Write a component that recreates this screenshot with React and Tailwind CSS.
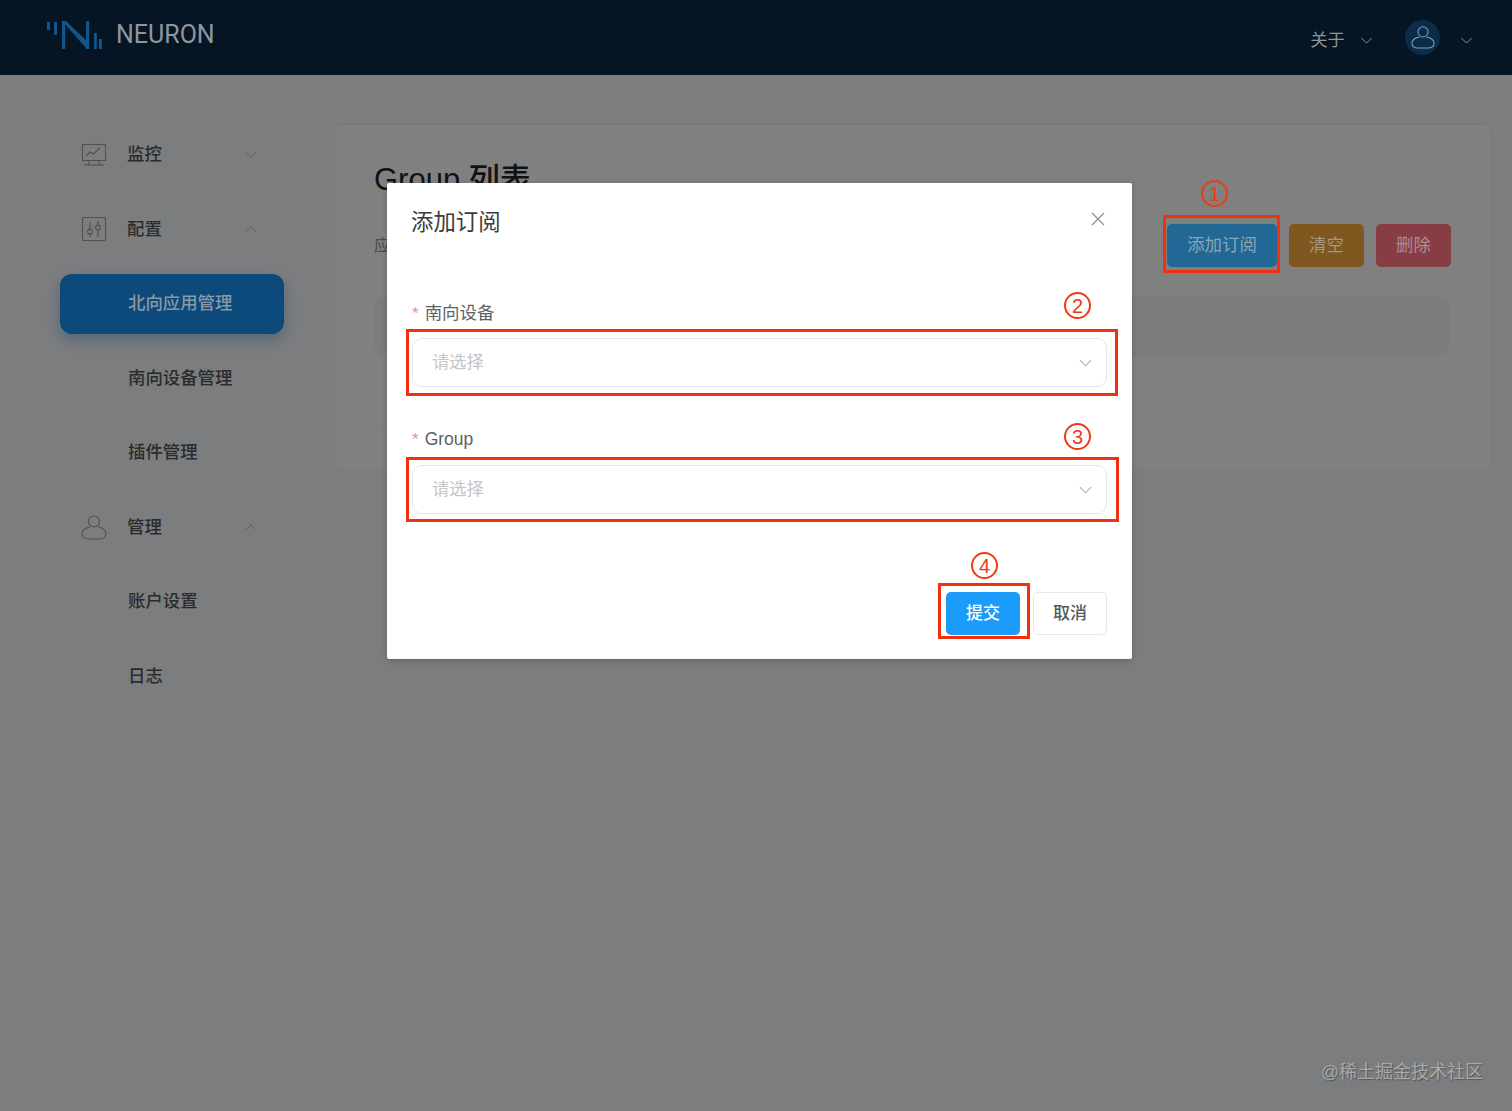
import React from "react";

function Chevron({ up, className }) {
  return (
    <svg viewBox="0 0 14 8" className={className} fill="none" stroke="currentColor" strokeWidth="1.1">
      <path d={up ? "M1 7 L7 1 L13 7" : "M1 1 L7 7 L13 1"} />
    </svg>
  );
}

function Logo() {
  return (
    <svg width="58" height="30" viewBox="0 0 58 30" fill="#125589">
      <rect x="2" y="2" width="3" height="8" />
      <rect x="9" y="2" width="3" height="13" />
      <rect x="17" y="1" width="3.2" height="28" />
      <path d="M18 2 L21 1 L44 23 L44 28 L41 28 Z" />
      <rect x="41" y="1" width="3.2" height="28" />
      <rect x="49" y="13" width="2.8" height="16" />
      <rect x="54" y="19" width="2.8" height="10" />
    </svg>
  );
}

function MonitorIcon() {
  return (
    <svg width="26" height="26" viewBox="0 0 26 26" fill="none" stroke="#505153" strokeWidth="1.1">
      <rect x="1.5" y="2.5" width="23" height="16" />
      <path d="M5 14 L9 10 L12 12 L19 6" />
      <path d="M8 18.5 V22.5 M18 18.5 V22.5 M3 23 H23" />
    </svg>
  );
}

function SlidersIcon() {
  return (
    <svg width="26" height="26" viewBox="0 0 26 26" fill="none" stroke="#505153" strokeWidth="1.1">
      <rect x="1.5" y="1.5" width="23" height="23" rx="1" />
      <path d="M9 6 V13 M9 18 V21 M17 5 V9 M17 14 V21" />
      <circle cx="9" cy="15.5" r="2.4" />
      <circle cx="17" cy="11.5" r="2.4" />
    </svg>
  );
}

function PersonIcon({ size, color }) {
  return (
    <svg width={size} height={size} viewBox="0 0 26 26" fill="none" stroke={color} strokeWidth="1.1">
      <circle cx="13" cy="7.5" r="5.5" />
      <path d="M9 13 C4 14 1 17 1 20 C1 23 4 25 7 25 H19 C22 25 25 23 25 20 C25 17 22 14 17 13" />
    </svg>
  );
}

function GroupItem({ icon, label, up }) {
  return (
    <div className="flex h-[60px] items-center">
      <div className="flex w-[67px] justify-center pl-[1px]">{icon}</div>
      <span className="w-[35px] text-[17.4px] font-medium text-[#2a2b2c]">{label}</span>
      <Chevron up={up} className="ml-[83px] h-[6px] w-[12px] text-[#5a5b5d]" />
    </div>
  );
}

function SubItem({ label, active }) {
  return (
    <div
      className={
        active
          ? "flex h-[60px] w-[224px] items-center rounded-[12px] bg-[#0c4a7b] pl-[68px] text-[17.4px] font-medium text-[#8a98a3] shadow-[0_6px_14px_rgba(15,60,100,0.35)]"
          : "flex h-[60px] w-[224px] items-center pl-[68px] text-[17.4px] font-medium text-[#2a2b2c]"
      }
    >
      {label}
    </div>
  );
}

function Field({ label, mt, gap }) {
  return (
    <div className={mt}>
      <div className="flex h-[24px] items-center text-[17.5px] text-[#5f5f5f]">
        <span className="mr-[6px] mt-[2px] text-[17px] text-[#f58a93]">*</span>
        {label}
      </div>
      <div className={"flex h-[49px] items-center justify-between rounded-[10px] border border-[#e3e6ea] bg-white pl-[19px] pr-[14px] text-[17.3px] text-[#c4c6c9] " + gap}>
        请选择
        <Chevron className="h-[8px] w-[13px] text-[#a9abae]" />
      </div>
    </div>
  );
}

function RedBox({ className }) {
  return <div className={"absolute border-[3px] border-[#f0300f] " + className} />;
}

function Num({ n, className }) {
  return (
    <div
      className={
        "absolute flex h-[27px] w-[27px] items-center justify-center rounded-full border-2 border-[#ee3a14] text-[20px] leading-none text-[#ee3a14] " +
        className
      }
    >
      {n}
    </div>
  );
}

export default function App() {
  return (
    <div
      className="relative flex h-[1111px] w-[1512px] flex-col overflow-hidden bg-[#7c7d7f]"
      style={{ fontFamily: '"Liberation Sans", "Noto Sans CJK SC", sans-serif' }}
    >
      {/* Header */}
      <header className="flex h-[75px] shrink-0 items-center justify-between bg-[#051524] pl-[45px] pr-[39px]">
        <div className="mb-[6px] flex items-center">
          <Logo />
          <span className="ml-[13px] font-['Roboto'] text-[25px] text-[#8f979e]">NEURON</span>
        </div>
        <div className="flex items-center pt-[5px] text-[#8f959b]">
          <span className="text-[17.4px]">关于</span>
          <Chevron className="ml-[15px] h-[7px] w-[13px]" />
          <div className="ml-[32px] flex h-[35px] w-[35px] -translate-y-[3px] items-center justify-center rounded-full bg-[#0b2d4b]">
            <PersonIcon size={24} color="#8aa0b3" />
          </div>
          <Chevron className="ml-[20px] h-[7px] w-[13px]" />
        </div>
      </header>

      {/* Body */}
      <div className="flex flex-1 items-start">
        <aside className="ml-[60px] mt-[49.5px] flex w-[224px] shrink-0 flex-col gap-[14.5px]">
          <GroupItem icon={<MonitorIcon />} label="监控" />
          <GroupItem icon={<SlidersIcon />} label="配置" up />
          <SubItem label="北向应用管理" active />
          <SubItem label="南向设备管理" />
          <SubItem label="插件管理" />
          <GroupItem icon={<PersonIcon size={26} color="#505153" />} label="管理" up />
          <SubItem label="账户设置" />
          <SubItem label="日志" />
        </aside>

        <main className="ml-[52px] mt-[50px] h-[345px] w-[1154px] rounded-[6px] bg-[#808080] px-[38px] pt-[34px] shadow-[0_-1px_2px_rgba(0,0,0,0.05)]">
          <div className="flex items-start justify-between">
            <div>
              <h1 className="mt-[1px] text-[31px] font-medium leading-[40px] text-[#111213]">Group 列表</h1>
              <p className="mt-[34px] text-[16px] leading-[24px] text-[#4b4c4e]">应用名称</p>
            </div>
            <div className="mr-[1px] mt-[65px] flex gap-[12px]">
              <button className="h-[43px] w-[110px] rounded-[5px] bg-[#226897] text-[17.4px] text-[#8fa4b2]">添加订阅</button>
              <button className="h-[43px] w-[75px] rounded-[5px] bg-[#7e581f] text-[17.4px] text-[#a8977a]">清空</button>
              <button className="h-[43px] w-[75px] rounded-[5px] bg-[#863d43] text-[17.4px] text-[#ab8d8f]">删除</button>
            </div>
          </div>
          <div className="mt-[29px] h-[60px] w-[1076px] rounded-[12px] bg-[#7b7c7e]" />
          <div className="mt-[74px] h-px w-[1076px] bg-[#7a7b7c]" />
        </main>
      </div>

      {/* Watermark */}
      <div className="absolute bottom-[27px] right-[29px] text-[18px] leading-[24px] text-[#a8a9aa] [text-shadow:1px_1px_1px_#555]">
        @稀土掘金技术社区
      </div>

      {/* Modal */}
      <div className="absolute left-[387px] top-[183px] h-[476px] w-[745px] rounded-[2px] bg-white px-[25px] shadow-[0_2px_6px_rgba(0,0,0,0.2)]">
        <div className="flex h-[80px] items-start justify-between pt-[23px]">
          <span className="-ml-px text-[22.4px] leading-[34px] text-[#3c3c3c]">添加订阅</span>
          <svg width="14" height="14" viewBox="0 0 14 14" className="mr-[2px] mt-[6px] text-[#8c8c8c]" fill="none" stroke="currentColor" strokeWidth="1.2">
            <path d="M1 1 L13 13 M13 1 L1 13" />
          </svg>
        </div>
        <Field label="南向设备" mt="mt-[38px]" gap="mt-[13px]" />
        <Field label="Group" mt="mt-[40px]" gap="mt-[14px]" />
        <div className="mt-[78px] flex justify-end gap-[13px]">
          <button className="h-[43px] w-[74px] rounded-[5px] bg-[#1b9bfa] text-[17px] font-medium text-white">提交</button>
          <button className="h-[43px] w-[74px] rounded-[5px] border border-[#e6e8eb] bg-white text-[17px] font-medium text-[#595959]">取消</button>
        </div>
      </div>

      {/* Annotations */}
      <RedBox className="left-[1163px] top-[215px] h-[58px] w-[117px]" />
      <RedBox className="left-[406px] top-[329px] h-[67px] w-[712px]" />
      <RedBox className="left-[406px] top-[457px] h-[65px] w-[713px]" />
      <RedBox className="left-[938px] top-[583px] h-[56px] w-[92px]" />
      <Num n="1" className="left-[1201px] top-[180px]" />
      <Num n="2" className="left-[1064px] top-[292px]" />
      <Num n="3" className="left-[1064px] top-[423px]" />
      <Num n="4" className="left-[971px] top-[552px]" />
    </div>
  );
}
